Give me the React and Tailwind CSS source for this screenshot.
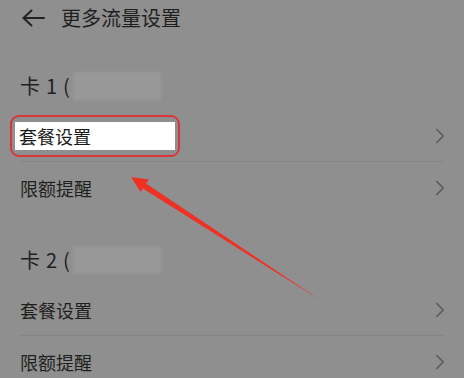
import { ChevronRight } from 'lucide-react';

const font = { fontFamily: '"Noto Sans CJK SC", "Noto Sans", sans-serif' };

function Row({ label, highlighted, divider }) {
  return (
    <div className={`flex items-center justify-between h-[52px] ${divider ? 'border-b border-[#858585]' : ''}`}>
      {highlighted ? (
        <span className="-ml-[10px] border-2 border-[#d8363a] rounded-[9px] px-[3px] py-[5px]">
          <span className="block w-[160px] h-[28px] bg-white pl-[4px] text-[18px] leading-[28px] text-[#1b1b1b]">{label}</span>
        </span>
      ) : (
        <span className="text-[18px] leading-[28px] text-[#1f1f1f]">{label}</span>
      )}
      <ChevronRight className="w-[26px] h-[26px] text-[#5a5a5a] -mr-[9px]" strokeWidth={1.5} />
    </div>
  );
}

function CardHeader({ num, className }) {
  return (
    <div className={`flex items-center h-[48px] gap-[6px] text-[20px] text-[#1f1f1f] ${className}`}>
      <span>卡</span>
      <span>{num}</span>
      <span>(</span>
      <span className="-ml-[3px] w-[88px] h-[28px] bg-[#989898] blur-[1px]" />
    </div>
  );
}

export default function App() {
  return (
    <div className="relative w-[464px] h-[378px] overflow-hidden bg-[#8f8f8f] px-5" style={font}>
      <div className="flex items-center h-9 gap-[16px]">
        <svg width="23" height="18" viewBox="0 0 23 18" fill="none" stroke="#222" strokeWidth="2" strokeLinecap="round" strokeLinejoin="round" className="ml-[2px]">
          <path d="M1.5 9H22" />
          <path d="M9.5 1.5L1.5 9l8 7.5" />
        </svg>
        <span className="text-[20px] text-[#1f1f1f]">更多流量设置</span>
      </div>

      <CardHeader num="1" className="mt-[26px]" />
      <Row label="套餐设置" highlighted divider />
      <Row label="限额提醒" />

      <CardHeader num="2" className="mt-[22px]" />
      <Row label="套餐设置" divider />
      <Row label="限额提醒" />

      <svg className="absolute left-0 top-0 pointer-events-none" width="464" height="378">
        <polygon
          points="131,177 149,179.5 146,183.5 320,300 142.8,188.5 140.5,192"
          fill="#ee3124"
        />
      </svg>
    </div>
  );
}
